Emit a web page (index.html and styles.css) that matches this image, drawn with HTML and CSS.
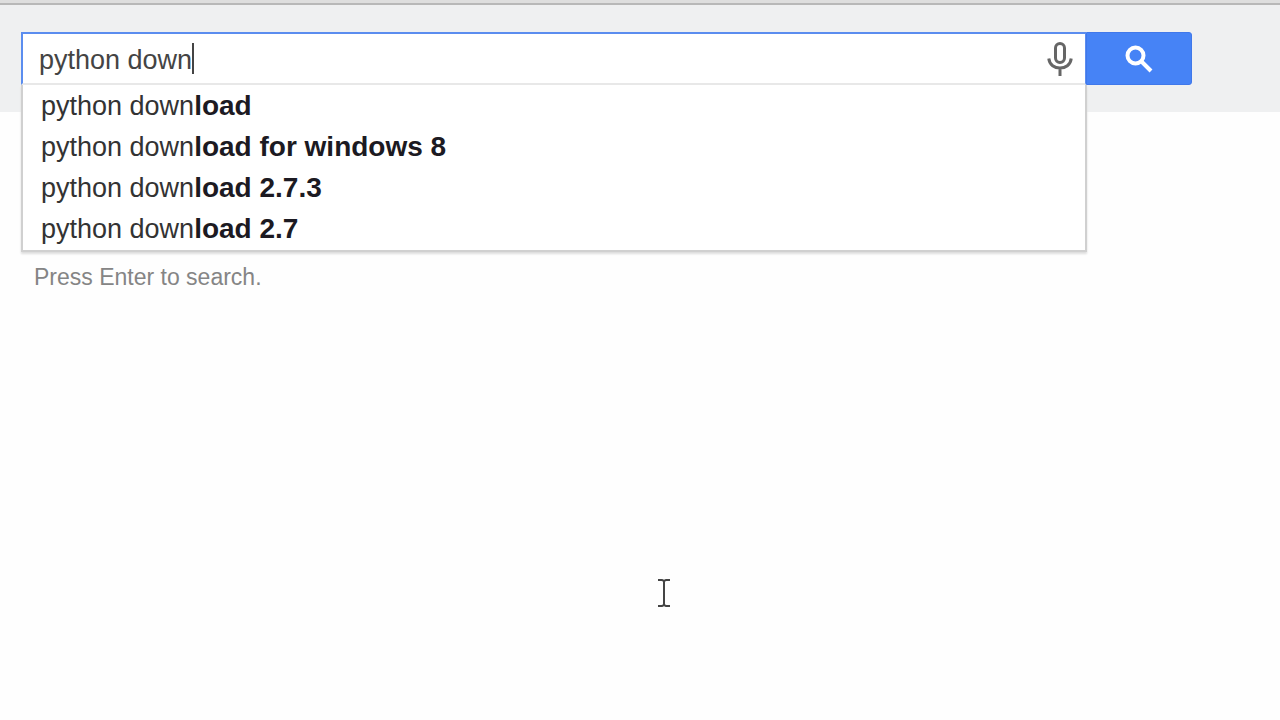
FILE: index.html
```html
<!DOCTYPE html>
<html lang="en">
<head>
<meta charset="utf-8">
<title>python down - Search</title>
<link rel="stylesheet" href="styles.css">
</head>
<body>
<header class="header">
  <form class="search" role="search">
    <div class="field">
      <input class="query" type="text" value="python down" aria-label="Search" autocomplete="off">
      <span class="caret"></span>
      <button class="voice" type="button" aria-label="Search by voice">
        <svg width="26" height="34" viewBox="0 0 26 34" fill="none" stroke="#666" stroke-width="3">
          <rect x="8.500" y="1.500" width="9" height="19" rx="4.500"/>
          <path d="M1.800 16.500C3 29.300 23 29.300 24.200 16.500M13 26v8"/>
        </svg>
      </button>
      <ul class="suggestions">
        <li class="suggestion">python down<b class="completion">load</b></li>
        <li class="suggestion">python down<b class="completion">load for windows 8</b></li>
        <li class="suggestion">python down<b class="completion">load 2.7.3</b></li>
        <li class="suggestion">python down<b class="completion">load 2.7</b></li>
      </ul>
    </div>
    <button class="submit" type="submit" aria-label="Search">
      <svg width="28" height="28" viewBox="0 0 28 28" fill="none" stroke="#fff">
        <circle cx="10.500" cy="10.500" r="8" stroke-width="4"/>
        <path d="M16.500 16.500l9.500 9.500" stroke-width="4"/>
      </svg>
    </button>
  </form>
</header>
<main class="results">
  <p class="hint">Press Enter to search.</p>
</main>
<svg class="pointer" width="14" height="30" viewBox="0 0 14 30" fill="none" stroke="#444" stroke-width="2">
  <path d="M1 2h4l2 1 2-1h4M7 3v24M1 28h4l2-1 2 1h4"/>
</svg>
</body>
</html>
```
FILE: styles.css
```css
body {
  margin: 0;
  background: #fefefe;
  color: #333;
  font-family: "Liberation Sans", Arial, sans-serif;
}

.header {
  padding: 29px 88px 27px 21px;
  border-top: 3px solid #dedede;
  background: linear-gradient(#b8b8b8, #b8b8b8) top / 100% 2px no-repeat #eff0f1;
}

.search {
  display: flex;
  height: 53px;
}

.field {
  position: relative;
  display: flex;
  flex: 1;
  align-items: center;
  box-sizing: border-box;
  border: 2px solid #5b8def;
  border-right-width: 1px;
  border-bottom: 2px solid #e8e8e8;
  background: #fff;
}

.query {
  flex: 1;
  min-width: 0;
  padding: 2px 16px 0;
  border: 0;
  outline: 0;
  background: transparent;
  color: #444;
  font: 27px/32px "Liberation Sans", Arial, sans-serif;
}

.caret {
  position: absolute;
  top: 9px;
  left: 169px;
  width: 2px;
  height: 31px;
  background: #444;
}

.voice {
  display: flex;
  padding: 0 12px;
  border: 0;
  background: transparent;
}

.suggestions {
  position: absolute;
  top: 100%;
  left: -2px;
  right: -2px;
  margin: 2px 0 0;
  padding: 1px 0 0;
  border: 2px solid #d0d0d0;
  border-top: 0;
  background: #fff;
  box-shadow: 0 2px 2px #ddd;
  list-style: none;
}

.suggestion {
  padding-left: 18px;
  color: #333;
  font-size: 27px;
  line-height: 41px;
}

.completion {
  color: #1c1a22;
  font-size: 28px;
  line-height: 32px;
}

.submit {
  display: flex;
  align-items: center;
  justify-content: center;
  width: 106px;
  padding: 0;
  border: 1px solid #4078ea;
  border-radius: 0 3px 3px 0;
  background: #4683f6;
}

.results {
  padding: 151px 34px 0;
}

.hint {
  margin: 0;
  color: #858585;
  font-size: 23px;
  line-height: 28px;
}

.pointer {
  position: absolute;
  top: 578px;
  left: 657px;
}
```
